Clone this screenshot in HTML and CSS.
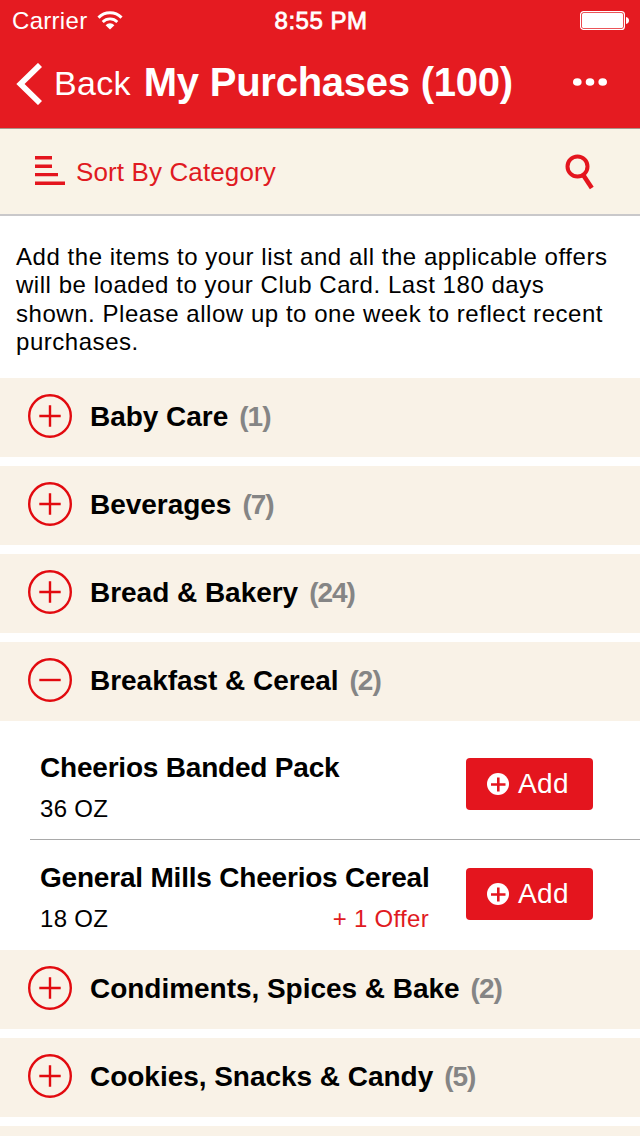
FILE: index.html
```html
<!DOCTYPE html>
<html lang="en">
<head>
    <meta charset="utf-8">
    <title>My Purchases</title>
    <link rel="stylesheet" href="styles.css">
</head>
<body>
    <svg class="symbols" width="0" height="0">
        <symbol id="plus" viewBox="0 0 44 44">
            <circle cx="22" cy="22" r="20.8" fill="none" stroke="#e20a0f" stroke-width="2.4"/>
            <path d="M11.3 22H32.7M22 11.3V32.7" stroke="#e20a0f" stroke-width="2.4"/>
        </symbol>
        <symbol id="minus" viewBox="0 0 44 44">
            <circle cx="22" cy="22" r="20.8" fill="none" stroke="#e20a0f" stroke-width="2.4"/>
            <path d="M11.3 22H32.7" stroke="#e20a0f" stroke-width="2.4"/>
        </symbol>
        <symbol id="add" viewBox="0 0 22 22">
            <circle cx="11" cy="11" r="11" fill="#fff"/>
            <path d="M4 11.5H18.5M11.3 4.5V18.5" stroke="#e4151e" stroke-width="2.6"/>
        </symbol>
    </svg>

    <header>
        <div class="status-bar">
            <div class="carrier">
                <span>Carrier</span>
                <svg width="26" height="19" viewBox="0 0 26 19">
                    <path d="M1.5 6.6A16 16 0 0 1 24.5 6.6" fill="none" stroke="#fff" stroke-width="3"/>
                    <path d="M5.7 11A10.3 10.3 0 0 1 20.3 11" fill="none" stroke="#fff" stroke-width="2.8"/>
                    <path d="M8.6 14.2A6.2 6.2 0 0 1 17.4 14.2L13 18.5Z" fill="#fff"/>
                </svg>
            </div>
            <div class="time">8:55 PM</div>
            <svg class="battery" width="50" height="20" viewBox="0 0 50 20">
                <rect x="0.6" y="0.6" width="43.8" height="17.8" rx="3" fill="none" stroke="#fff" stroke-width="1.2"/>
                <rect x="2" y="2" width="41" height="15" rx="1.5" fill="#fff"/>
                <path d="M46 6C50 6.5 50 12.5 46 13Z" fill="#fff"/>
            </svg>
        </div>
        <nav>
            <a class="back" href="#">
                <svg width="26" height="42" viewBox="0 0 26 42">
                    <path d="M24 2L4.5 21L24 40" fill="none" stroke="#fff" stroke-width="5.8"/>
                </svg>
                <span>Back</span>
            </a>
            <h1>My Purchases (100)</h1>
            <svg class="more" width="34" height="8" viewBox="0 0 34 8">
                <ellipse cx="4.3" cy="4" rx="4.3" ry="3.8" fill="#fff"/>
                <ellipse cx="17" cy="4" rx="4.3" ry="3.8" fill="#fff"/>
                <ellipse cx="29.7" cy="4" rx="4.3" ry="3.8" fill="#fff"/>
            </svg>
        </nav>
    </header>

    <div class="toolbar">
        <svg class="sort-icon" width="30" height="30" viewBox="0 0 30 30">
            <path d="M0 1.7H17M0 10.3H17M0 18.6H23M0 27.3H30" stroke="#e4151e" stroke-width="3.4"/>
        </svg>
        <span class="sort">Sort By Category</span>
        <svg class="search" width="30" height="36" viewBox="0 0 30 36">
            <circle cx="12.5" cy="12.5" r="10" fill="none" stroke="#e4151e" stroke-width="4"/>
            <path d="M18.2 21L26.8 34" stroke="#e4151e" stroke-width="4.6"/>
        </svg>
    </div>

    <main>
        <p class="notice">Add the items to your list and all the applicable offers<br>will be loaded to your Club Card. Last 180 days<br>shown. Please allow up to one week to reflect recent<br>purchases.</p>

        <div class="category">
            <svg width="44" height="44"><use href="#plus"/></svg>
            <h2>Baby Care</h2><span class="count">(1)</span>
        </div>
        <div class="category">
            <svg width="44" height="44"><use href="#plus"/></svg>
            <h2>Beverages</h2><span class="count">(7)</span>
        </div>
        <div class="category">
            <svg width="44" height="44"><use href="#plus"/></svg>
            <h2>Bread &amp; Bakery</h2><span class="count">(24)</span>
        </div>
        <div class="category open">
            <svg width="44" height="44"><use href="#minus"/></svg>
            <h2>Breakfast &amp; Cereal</h2><span class="count">(2)</span>
        </div>

        <ul class="items">
            <li>
                <div class="info">
                    <h3>Cheerios Banded Pack</h3>
                    <div class="details"><span>36 OZ</span></div>
                </div>
                <button class="add-button"><svg width="22" height="22"><use href="#add"/></svg>Add</button>
            </li>
            <li>
                <div class="info">
                    <h3>General Mills Cheerios Cereal</h3>
                    <div class="details"><span>18 OZ</span><span class="offer">+ 1 Offer</span></div>
                </div>
                <button class="add-button"><svg width="22" height="22"><use href="#add"/></svg>Add</button>
            </li>
        </ul>

        <div class="category">
            <svg width="44" height="44"><use href="#plus"/></svg>
            <h2>Condiments, Spices &amp; Bake</h2><span class="count">(2)</span>
        </div>
        <div class="category">
            <svg width="44" height="44"><use href="#plus"/></svg>
            <h2>Cookies, Snacks &amp; Candy</h2><span class="count">(5)</span>
        </div>
        <div class="category partial"></div>
    </main>
</body>
</html>
```
FILE: styles.css
```css
* {
    box-sizing: border-box;
}
body {
    margin: 0;
    background-color: #fff;
    color: #000;
    font-family: "Liberation Sans", Arial, sans-serif;
}
h1, h2, h3, p, ul {
    margin: 0;
    padding: 0;
}
svg {
    display: block;
    flex: none;
}
.symbols {
    display: none;
}
header {
    height: 129px;
    background-color: #e51b21;
    border-bottom: 1px solid #a9968a;
    color: #fff;
}
.status-bar {
    display: grid;
    grid-template-columns: 1fr auto 1fr;
    align-items: center;
    height: 40px;
    padding: 1px 10px 0 12px;
    font-size: 24px;
    letter-spacing: 0.3px;
}
.carrier {
    display: flex;
    align-items: center;
    gap: 10px;
}
.time {
    -webkit-text-stroke: 0.8px #fff;
    letter-spacing: 0.5px;
}
.battery {
    justify-self: end;
}
nav {
    display: flex;
    align-items: center;
    height: 88px;
    padding: 0 33px 4px 16px;
}
.back {
    display: flex;
    align-items: center;
    gap: 12px;
    padding-top: 3px;
    color: #fff;
    font-size: 34px;
    letter-spacing: 0.3px;
    text-decoration: none;
}
nav h1 {
    margin-left: 13px;
    font-size: 40px;
    line-height: 46px;
    letter-spacing: -0.25px;
    white-space: nowrap;
}
.more {
    margin-left: auto;
}
.toolbar {
    display: flex;
    align-items: center;
    height: 87px;
    padding: 0 45px 0 35px;
    background-color: #f9f3e7;
    border-bottom: 2px solid #c9c8ca;
}
.sort-icon {
    margin-bottom: 2px;
}
.sort {
    margin-left: 11px;
    padding-top: 2px;
    color: #e01a22;
    font-size: 26px;
    letter-spacing: 0.12px;
}
.search {
    margin-left: auto;
}
.notice {
    height: 162px;
    padding: 27px 16px 0;
    font-size: 24px;
    line-height: 28.4px;
    letter-spacing: 0.54px;
    white-space: nowrap;
}
.category {
    display: flex;
    align-items: center;
    height: 79px;
    margin-bottom: 9px;
    padding: 0 28px 3px;
    background-color: #f9f2e7;
    font-size: 28px;
    font-weight: bold;
}
.category.open {
    margin-bottom: 0;
}
.category.partial {
    height: 10px;
    margin-bottom: 0;
}
.category h2 {
    margin-left: 18px;
    padding-top: 2px;
    font-size: 28px;
    letter-spacing: -0.03px;
}
.count {
    margin-left: 11px;
    padding-top: 2px;
    color: #858585;
    letter-spacing: -1px;
}
.items {
    list-style-type: none;
    padding-left: 30px;
}
.items li {
    display: flex;
    height: 119px;
    padding: 30px 47px 0 10px;
    border-bottom: 1px solid #a9a9a9;
}
.items li + li {
    height: 110px;
    padding-top: 21px;
    border-bottom: none;
}
.info {
    width: 389px;
}
.info h3 {
    padding-top: 1px;
    font-size: 28px;
    line-height: 32px;
    letter-spacing: -0.2px;
    white-space: nowrap;
}
.details {
    display: flex;
    justify-content: space-between;
    margin-top: 11px;
    font-size: 24px;
    line-height: 28px;
    letter-spacing: 0.3px;
}
.offer {
    color: #e01a22;
}
.add-button {
    display: flex;
    align-items: center;
    justify-content: center;
    gap: 9px;
    width: 127px;
    height: 52px;
    margin: 7px 0 0 auto;
    padding: 0 3px 0 0;
    background-color: #e4151e;
    color: #fff;
    border: none;
    border-radius: 4px;
    font-family: inherit;
    font-size: 28px;
    letter-spacing: 0.4px;
}
```
